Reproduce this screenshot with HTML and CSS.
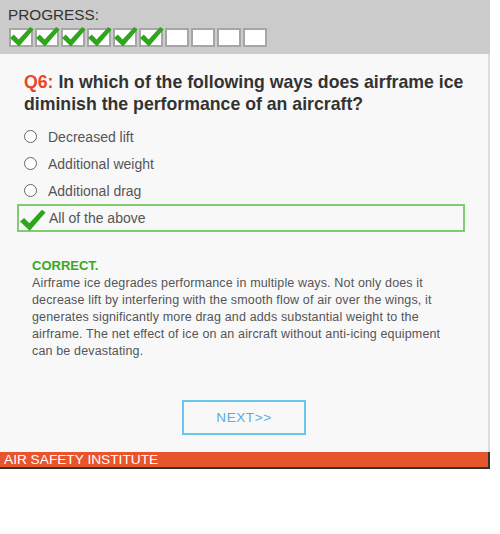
FILE: index.html
```html
<!DOCTYPE html>
<html lang="en">
<head>
    <meta charset="UTF-8">
    <meta name="viewport" content="width=device-width, initial-scale=1.0">
    <title>Airframe Icing Quiz</title>
    <link rel="stylesheet" href="styles.css">
</head>
<body>
    <div class="quiz">
        <div class="progress">
            <p class="progress-label">PROGRESS:</p>
            <div class="progress-boxes">
                <span class="box done"><svg viewBox="0 0 24 20"><path d="M0 11 L3.8 7.6 L8.6 12.6 L20.2 0 L23.6 2.6 L9 19.5 Z"/></svg></span>
                <span class="box done"><svg viewBox="0 0 24 20"><path d="M0 11 L3.8 7.6 L8.6 12.6 L20.2 0 L23.6 2.6 L9 19.5 Z"/></svg></span>
                <span class="box done"><svg viewBox="0 0 24 20"><path d="M0 11 L3.8 7.6 L8.6 12.6 L20.2 0 L23.6 2.6 L9 19.5 Z"/></svg></span>
                <span class="box done"><svg viewBox="0 0 24 20"><path d="M0 11 L3.8 7.6 L8.6 12.6 L20.2 0 L23.6 2.6 L9 19.5 Z"/></svg></span>
                <span class="box done"><svg viewBox="0 0 24 20"><path d="M0 11 L3.8 7.6 L8.6 12.6 L20.2 0 L23.6 2.6 L9 19.5 Z"/></svg></span>
                <span class="box done"><svg viewBox="0 0 24 20"><path d="M0 11 L3.8 7.6 L8.6 12.6 L20.2 0 L23.6 2.6 L9 19.5 Z"/></svg></span>
                <span class="box"></span>
                <span class="box"></span>
                <span class="box"></span>
                <span class="box"></span>
            </div>
        </div>

        <div class="content">
            <h2 class="question"><span class="qnum">Q6:</span> In which of the following ways does airframe ice diminish the performance of an aircraft?</h2>

            <ul class="options">
                <li class="option"><span class="radio"></span>Decreased lift</li>
                <li class="option"><span class="radio"></span>Additional weight</li>
                <li class="option"><span class="radio"></span>Additional drag</li>
                <li class="option selected"><svg class="tick" viewBox="0 0 24 20"><path d="M0 11 L3.8 7.6 L8.6 12.6 L20.2 0 L23.6 2.6 L9 19.5 Z"/></svg>All of the above</li>
            </ul>

            <div class="feedback">
                <p class="feedback-title">CORRECT.</p>
                <p class="feedback-text">Airframe ice degrades performance in multiple ways. Not only does it decrease lift by interfering with the smooth flow of air over the wings, it generates significantly more drag and adds substantial weight to the airframe. The net effect of ice on an aircraft without anti-icing equipment can be devastating.</p>
            </div>

            <div class="actions">
                <a href="#" class="next">NEXT&gt;&gt;</a>
            </div>
        </div>

        <div class="footer">AIR SAFETY INSTITUTE</div>
    </div>
</body>
</html>
```

FILE: styles.css
```css
body {
    margin: 0;
    background-color: #fff;
    font-family: "Liberation Sans", Arial, sans-serif;
    color: #555;
}
.quiz {
    width: 490px;
}
.progress {
    height: 54px;
    box-sizing: border-box;
    padding: 6px 8px 0 8px;
    background-color: #cbcbcb;
}
.progress-label {
    margin: 0;
    font-size: 15.3px;
    line-height: 17px;
    color: #333;
}
.progress-boxes {
    display: flex;
    gap: 2px;
    margin: 5px 0 0 1px;
}
.box {
    position: relative;
    width: 20px;
    height: 15px;
    border: 2px solid #a6a6a6;
    background-color: #fff;
}
.box svg {
    position: absolute;
    left: -1px;
    bottom: -2px;
    width: 24px;
    height: 20px;
    fill: #2fa51b;
}
.content {
    height: 398px;
    box-sizing: border-box;
    padding: 17px 24px 0 24px;
    background-color: #f8f8f8;
    border-right: 2px solid #ddd;
}
.question {
    margin: 0;
    font-size: 17.7px;
    line-height: 22px;
    font-weight: bold;
    color: #333;
}
.qnum {
    color: #e8472b;
}
.options {
    list-style: none;
    margin: 8px 0 0 0;
    padding: 0;
}
.option {
    display: flex;
    align-items: center;
    gap: 11px;
    height: 27px;
    font-size: 14px;
    color: #555;
}
.radio {
    width: 11px;
    height: 11px;
    border: 1.5px solid #666;
    border-radius: 50%;
    background-color: #fff;
}
.option.selected {
    box-sizing: border-box;
    margin: 0 0 0 -7px;
    width: 448px;
    height: 28px;
    padding: 0 0 0 1px;
    gap: 3px;
    border: 2px solid #80cc70;
}
.tick {
    width: 26px;
    height: 23px;
    margin-top: 4px;
    fill: #2fa51b;
}
.feedback {
    margin: 26px 0 0 8px;
    width: 415px;
}
.feedback-title {
    margin: 0;
    font-size: 13px;
    line-height: 16px;
    font-weight: bold;
    color: #3aa81e;
}
.feedback-text {
    margin: 1px 0 0 0;
    font-size: 12.5px;
    line-height: 17px;
    letter-spacing: 0.15px;
    color: #555;
}
.actions {
    display: flex;
    justify-content: center;
    margin-top: 40px;
}
.next {
    display: inline-block;
    width: 120px;
    height: 31px;
    line-height: 31px;
    text-align: center;
    border: 2px solid #6ac6ea;
    color: #5aacde;
    text-decoration: none;
    font-size: 13.5px;
    letter-spacing: 0.6px;
}
.footer {
    height: 15px;
    line-height: 16px;
    padding-left: 4px;
    background-color: #e8542c;
    border-right: 2px solid #333;
    border-bottom: 2px solid #333;
    color: #fff;
    font-size: 13.7px;
}
```
